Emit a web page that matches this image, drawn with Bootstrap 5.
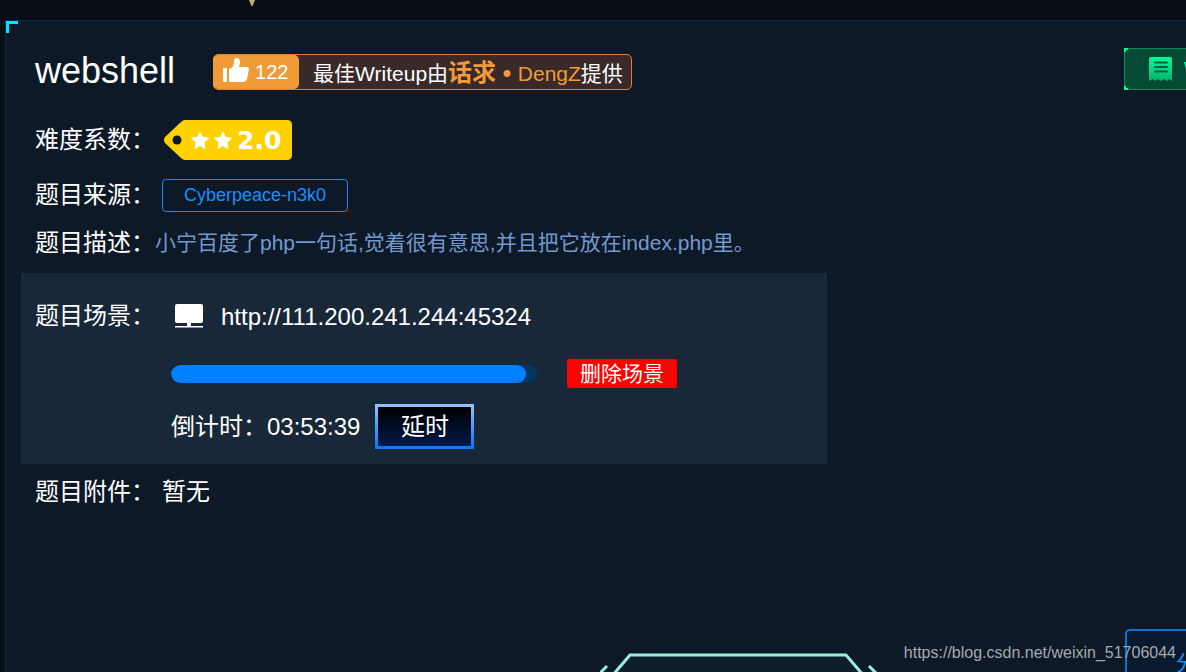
<!DOCTYPE html>
<html lang="zh-CN">
<head>
<meta charset="utf-8">
<meta name="viewport" content="width=device-width, initial-scale=1">
<title>webshell</title>
<link href="https://cdn.jsdelivr.net/npm/bootstrap@5.3.0/dist/css/bootstrap.min.css" rel="stylesheet">
<style>
body { background: #090f17; color: #fff; font-family: "Liberation Sans", "Noto Sans CJK SC", sans-serif; font-size: 24px; line-height: 34px; overflow-x: hidden; }
.top-strip { height: 20px; }
.strip-mark { left: 248px; top: 0; }
.task-panel { background: #0d1926; border: 1px solid #0b2c4b; border-width: 1px 0 0 1px; margin-left: 5px; min-height: calc(100vh - 20px); padding-top: 27px; }
.panel-corner { left: 0; top: 0; width: 12px; height: 12px; border: solid #00e5ff; border-width: 3px 0 0 3px; }
.line-item { padding-left: 29px; }
.task-name { font-size: 36px; line-height: 42px; padding-top: 4px; }
.head-row { height: 42px; }
.best-writeup { height: 36px; margin: 6px 0 0 38px; background: #392a29; border: 1px solid #e87a2c; border-radius: 5px; font-size: 21px; padding-right: 8px; }
.like-btn { width: 86px; height: 34px; margin-left: -1px; padding: 0 0 0 9px; border: 0; background: #f19b38; border-radius: 5px; color: #fff; font-size: 20px; line-height: 34px; }
.like-btn svg { margin: 0 5px 4px 0; }
.best-text { margin-left: 14px; padding-top: 2px; }
.author { color: #f19b38; }
.author b { font-size: 24px; }
.wp-btn { width: 62px; height: 42px; padding: 0 0 0 24px; background: #044a35; border: 1px solid #0b8b58; border-right: 0; color: #00ff96; font-size: 20px; }
.wp-btn::before, .wp-btn::after { content: ""; position: absolute; left: -1px; width: 4px; height: 4px; border: solid #00ff96; }
.wp-btn::before { top: -1px; border-width: 2px 0 0 2px; }
.wp-btn::after { bottom: -1px; border-width: 0 0 2px 2px; }
.wp-btn svg { margin-right: 11px; }
.field-name { width: 120px; }
.field-list { display: grid; padding-top: 29px; }
.source-row { margin-top: 17px; }
.description-row { margin-top: 13px; }
.source-link { width: 186px; height: 33px; border: 1px solid #1288f5; border-radius: 4px; color: #1890ff; font-size: 18px; line-height: 31px; margin-left: 7px; }
.description { font-size: 21px; color: #729ad0; padding-top: 1px; }
.scene { background: #182839; width: 806px; max-width: calc(100% - 15px); margin: 13px 0 11px 15px; padding: 26px 14px 15px; }
.scene-body { padding-left: 16px; }
.scene-url { color: #fff; line-height: 36px; }
.time-bar { width: 366px; height: 18px; border-radius: 9px; background: #053660; }
.time-bar .progress-bar { background: #007fff; border-radius: 9px; }
.delete-btn { width: 110px; height: 29px; background: #f00; color: #fff; border: 0; border-radius: 2px; font-size: 21px; line-height: 29px; margin-left: 30px; }
.delay-btn { width: 99px; height: 45px; margin-left: 15px; color: #fff; border: 3px solid; border-image: linear-gradient(#8fc2ff, #0a78ff) 1; background: linear-gradient(#000, #03194a); line-height: 38px; }
.attachment { margin-left: 7px; }
.foot-row { height: 43px; }
.hex-btn { width: 280px; margin-right: 245px; }
.share-btn { width: 61px; height: 43px; border: 2px solid #0874d1; border-width: 2px 0 0 2px; border-radius: 5px 0 0 0; background: #0a1a2e; color: #1890ff; padding: 20px 0 0 49px; font-size: 21px; line-height: 24px; }
.watermark { right: 10px; bottom: 7px; font-size: 16px; line-height: 24px; color: #a5aaaf; }
</style>
</head>
<body>
<div class="top-strip position-relative">
  <svg class="strip-mark position-absolute" width="8" height="6" aria-hidden="true"><path d="M1 0h6L4.500 6h-1z" fill="#c9ad78"/></svg>
</div>
<main class="task-panel position-relative d-flex flex-column overflow-hidden">
  <span class="panel-corner position-absolute"></span>

  <header class="head-row line-item d-flex align-items-center">
    <h1 class="task-name fw-normal m-0">webshell</h1>
    <div class="best-writeup d-flex align-items-center text-nowrap">
      <button type="button" class="like-btn d-flex align-items-center">
        <svg width="28" height="26" viewBox="0 0 28 26" fill="#fff" aria-hidden="true"><path d="M2 11h3v14H2q-1 0-1-1V12q0-1 1-1zM7 12c4-1 5-4 5-8 0-2 1-3 2.500-3C17 1 18 3 18 5c0 2-1 4-1 5h7q3 0 3 2l-2 10q-1 3-3 3H9q-2 0-2-1z"/></svg>122
      </button>
      <div class="best-text">最佳Writeup由<a href="#" class="author text-decoration-none"><b>话求 • </b>DengZ</a>提供</div>
    </div>
    <button type="button" class="wp-btn ms-auto position-relative d-flex align-items-center text-nowrap">
      <svg class="flex-shrink-0" width="24" height="26" viewBox="0 0 24 26" aria-hidden="true">
        <defs><linearGradient id="paper" x2="0" y2="1"><stop stop-color="#00ff96"/><stop offset="1" stop-color="#04b26d"/></linearGradient></defs>
        <path d="M3 1h18q2 0 2 2v22l-3-2-2 2-3-2-3 2-3-2-3 2-2-2-4 2V3q0-2 2-2z" fill="url(#paper)"/>
        <path d="M6 6.500h12M6 11h12M6 15.500h12" stroke="#04613f" stroke-width="2" stroke-linecap="round"/>
      </svg><span>WriteUp</span>
    </button>
  </header>

  <div class="field-list">
    <div class="line-item d-flex align-items-center">
      <div class="field-name">难度系数：</div>
      <svg class="ms-2" width="130" height="42" viewBox="0 0 130 42" role="img" aria-label="2.0">
        <path d="M22 1h102q5 0 5 5v30q0 5-5 5H22Q20 41 18 39L2 24Q0 21 2 18L18 3Q20 1 22 1z" fill="#ffd100"/>
        <circle cx="14" cy="21" r="4.500" fill="#0d1926"/>
        <path id="star" d="M37 13l2.500 5.500 6 .500-4.500 4.500 1 6-5-3-5 3 1-6-4.500-4.500 6-.500z" fill="#fff" stroke="#fff" stroke-linejoin="round"/>
        <use href="#star" x="23"/>
        <text x="74" y="30" font-family="DejaVu Sans" font-weight="700" font-size="25" fill="#fff">2.0</text>
      </svg>
    </div>

    <div class="source-row line-item d-flex align-items-center">
      <div class="field-name">题目来源：</div>
      <a href="#" class="source-link text-center text-decoration-none">Cyberpeace-n3k0</a>
    </div>

    <div class="description-row line-item d-flex align-items-center">
      <div class="field-name">题目描述：</div>
      <div class="description">小宁百度了php一句话,觉着很有意思,并且把它放在index.php里。</div>
    </div>
  </div>

  <section class="scene d-flex align-items-start">
    <div class="field-name flex-shrink-0">题目场景：</div>
    <div class="scene-body">
      <div class="d-flex align-items-center">
        <svg class="ms-1" width="30" height="28" viewBox="0 0 30 28" fill="#fff" aria-hidden="true"><rect y="1" width="28" height="19" rx="2"/><path d="M12 20h4v3h2v1h-8v-1h2zM0 23h28v1.500H0z"/></svg>
        <a href="#" class="scene-url text-decoration-none ms-3">http://111.200.241.244:45324</a>
      </div>
      <div class="d-flex align-items-center mt-4">
        <div class="progress time-bar" role="progressbar" aria-label="倒计时" aria-valuenow="97" aria-valuemin="0" aria-valuemax="100"><div class="progress-bar" style="width:97%"></div></div>
        <button type="button" class="delete-btn p-0">删除场景</button>
      </div>
      <div class="d-flex align-items-center mt-3">
        <span>倒计时：03:53:39</span>
        <button type="button" class="delay-btn p-0">延时</button>
      </div>
    </div>
  </section>

  <div class="line-item d-flex align-items-center">
    <div class="field-name">题目附件：</div>
    <div class="attachment">暂无</div>
  </div>

  <footer class="foot-row mt-auto d-flex justify-content-end">
    <svg class="hex-btn flex-shrink-0" height="43" viewBox="0 0 280 43" fill="none" stroke="#9beedb" aria-hidden="true">
      <path d="M12 47L30 26h216l18 21" fill="#0e1f2b" stroke-width="3"/>
      <path d="M0 44l7-7M276 44l-7-7" stroke-width="3"/>
    </svg>
    <button type="button" class="share-btn flex-shrink-0 overflow-hidden text-nowrap">分享</button>
  </footer>
  <div class="watermark position-absolute">https://blog.csdn.net/weixin_51706044</div>
</main>
<script src="https://cdn.jsdelivr.net/npm/bootstrap@5.3.0/dist/js/bootstrap.bundle.min.js"></script>
</body>
</html>
